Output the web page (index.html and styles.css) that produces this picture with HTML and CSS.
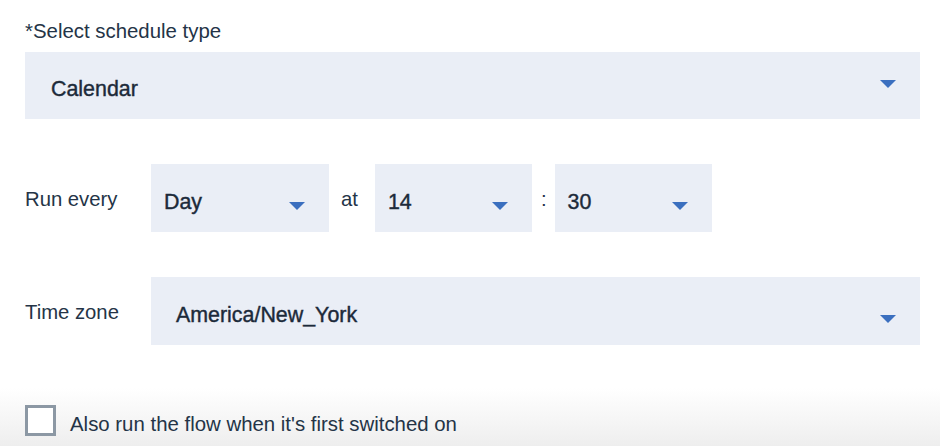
FILE: index.html
```html
<!DOCTYPE html>
<html lang="en">
<head>
<meta charset="utf-8">
<title>Schedule</title>
<link rel="stylesheet" href="styles.css">
</head>
<body>
<div class="form">
  <div class="field-label">*Select schedule type</div>
  <div class="select select-type">
    <span class="value">Calendar</span>
    <span class="caret caret-high"></span>
  </div>

  <div class="row row-run">
    <div class="row-label">Run every</div>
    <div class="row-controls">
      <div class="select select-sm select-day"><span class="value">Day</span><span class="caret"></span></div>
      <span class="sep sep-at">at</span>
      <div class="select select-sm select-time"><span class="value">14</span><span class="caret"></span></div>
      <span class="sep sep-colon">:</span>
      <div class="select select-sm select-time"><span class="value">30</span><span class="caret"></span></div>
    </div>
  </div>

  <div class="row row-zone">
    <div class="row-label">Time zone</div>
    <div class="select select-zone"><span class="value">America/New_York</span><span class="caret"></span></div>
  </div>

  <label class="check">
    <span class="box"></span>
    <span class="check-text">Also run the flow when it's first switched on</span>
  </label>
</div>
</body>
</html>
```

FILE: styles.css
```css
html {
  height: 446px;
}
body {
  margin: 0;
  height: 446px;
  overflow: hidden;
  font-family: "Liberation Sans", Arial, sans-serif;
  color: #243447;
  background: linear-gradient(to bottom, #ffffff 0, #ffffff 388px, #eeeeee 446px);
}
.form {
  padding: 19px 20px 0 25px;
}
.field-label {
  font-size: 20.4px;
  line-height: 25px;
  height: 33px;
}
.select {
  background: #eaeef6;
  display: flex;
  align-items: center;
  justify-content: space-between;
  box-sizing: border-box;
  color: #1c2a3a;
}
.value {
  font-size: 21.4px;
  -webkit-text-stroke: 0.4px #1c2a3a;
}
.caret {
  width: 0;
  height: 0;
  border-left: 8px solid transparent;
  border-right: 8px solid transparent;
  border-top: 8px solid #3b6fbf;
  margin-top: 6px;
}
.caret-high {
  margin-top: -12px;
}
.select-type {
  height: 67px;
  padding: 8px 24px 0 26px;
}
.row {
  display: grid;
  grid-template-columns: 126px 1fr;
  align-items: center;
}
.row-label {
  font-size: 20.3px;
  padding-top: 2px;
}
.row-run {
  margin-top: 45px;
}
.row-controls {
  display: flex;
  align-items: center;
}
.select-sm {
  height: 68px;
  padding: 9px 24px 0 13px;
}
.select-day {
  width: 178px;
}
.select-time {
  width: 157px;
}
.sep {
  font-size: 20.3px;
  padding-top: 2px;
}
.sep-at {
  margin: 0 17px 0 12px;
}
.sep-colon {
  margin: 0 8px 0 9px;
}
.row-zone {
  margin-top: 45px;
}
.select-zone {
  height: 68px;
  padding: 9px 24px 0 25px;
}
.check {
  display: flex;
  align-items: center;
  margin-top: 59px;
}
.box {
  width: 31px;
  height: 31px;
  box-sizing: border-box;
  border: 3px solid #8c98a4;
  background: #fff;
  margin-right: 14px;
}
.check-text {
  font-size: 20.4px;
  padding-top: 9px;
}
```
